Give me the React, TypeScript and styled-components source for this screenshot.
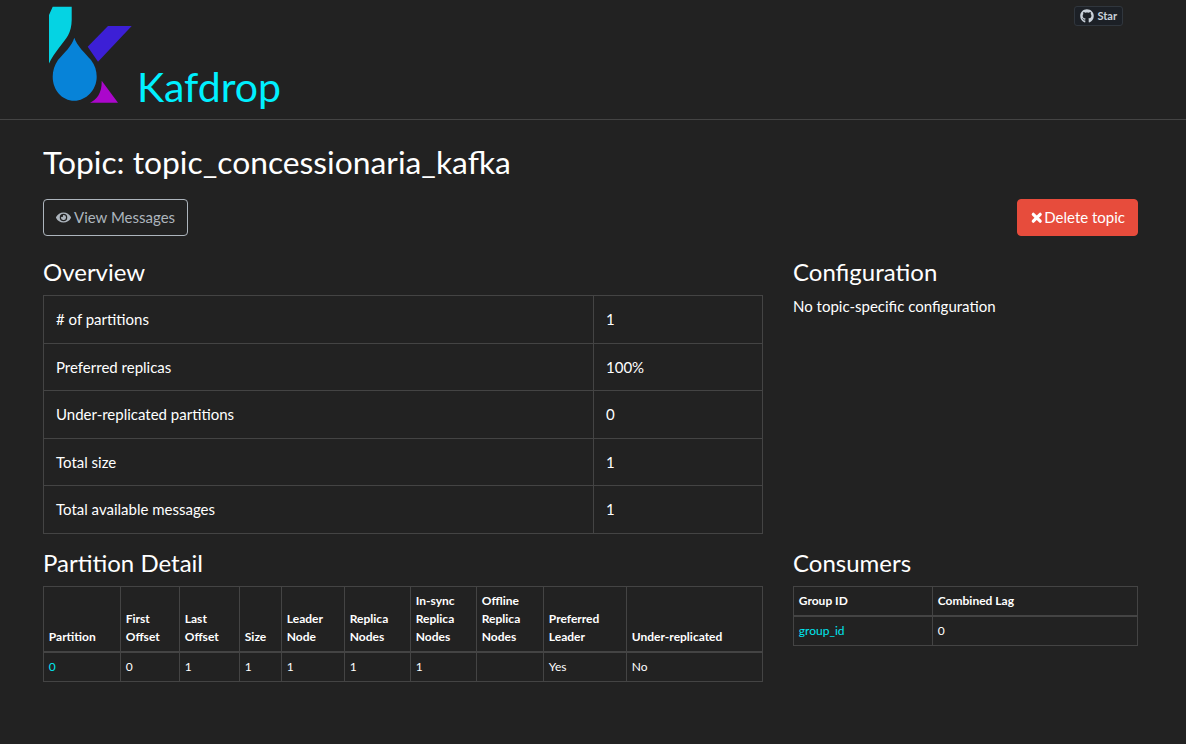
import styled, { createGlobalStyle } from "styled-components";
import { FaEye, FaGithub } from "react-icons/fa";

const GlobalStyle = createGlobalStyle`
  html, body {
    margin: 0;
    background-color: #222222;
    color: #ffffff;
    font-family: Lato, "Liberation Sans", sans-serif;
    font-size: 15px;
    line-height: 1.5;
  }
  * {
    box-sizing: border-box;
  }
`;

const Header = styled.header`
  height: 120px;
  border-bottom: 1px solid #444444;
  padding: 6px 63px 0 49px;
  display: flex;
  justify-content: space-between;
  align-items: flex-start;
`;
const Brand = styled.div`
  display: flex;
  align-items: flex-start;
`;
const BrandName = styled.span`
  font-size: 41px;
  line-height: 47px;
  margin: 57px 0 0 5px;
  color: #00f0ff;
`;
const StarButton = styled.a`
  display: flex;
  align-items: center;
  gap: 3px;
  height: 20px;
  padding: 0 5px;
  font-size: 11px;
  font-weight: 700;
  color: #c9d1d9;
  background-color: #1c2026;
  border: 1px solid #30363d;
  border-radius: 3px;
`;
const Container = styled.main`
  padding: 0 48px 0 43px;
`;
const Title = styled.h1`
  font-size: 31.8px;
  font-weight: 400;
  line-height: 39px;
  margin: 23px 0 17px;
`;
const ActionBar = styled.div`
  display: flex;
  justify-content: space-between;
  margin-bottom: 22px;
`;
const Button = styled.button<{ $danger?: boolean }>`
  display: flex;
  align-items: center;
  gap: ${(props) => (props.$danger ? "0" : "3px")};
  height: 37px;
  padding: 0 12px;
  font: inherit;
  color: ${(props) => (props.$danger ? "#ffffff" : "#adb5bd")};
  background-color: ${(props) => (props.$danger ? "#e74c3c" : "transparent")};
  border: 1px solid ${(props) => (props.$danger ? "#e74c3c" : "#adb5bd")};
  border-radius: 4px;
`;
const Row = styled.section`
  display: flex;
  gap: 30px;
  margin-bottom: 15px;
`;
const MainColumn = styled.div`
  width: 720px;
`;
const SideColumn = styled.div`
  width: 345px;
`;
const SectionTitle = styled.h2`
  font-size: 24px;
  font-weight: 400;
  line-height: 27px;
  margin: 0 0 10px;
`;
const Text = styled.p`
  margin: 0;
`;
const Table = styled.table`
  width: 100%;
  border-collapse: collapse;
  border: 1px solid #444444;
`;
const Cell = styled.td<{ $wide?: boolean }>`
  padding: 12px;
  border: 1px solid #444444;
  width: ${(props) => (props.$wide ? "550px" : "auto")};
`;
const SmallTable = styled(Table)`
  font-size: 12px;
  table-layout: fixed;
`;
const Column = styled.col<{ $width: number }>`
  width: ${(props) => props.$width}px;
`;
const HeadCell = styled.th`
  padding: 5.25px 4.8px;
  border: 1px solid #444444;
  border-bottom-width: 2px;
  text-align: left;
  vertical-align: bottom;
  font-weight: 700;
`;
const SmallCell = styled.td`
  padding: 4.8px;
  border: 1px solid #444444;
`;
const CellLink = styled.a`
  color: #00e6f0;
`;

const Logo = () => (
  <svg width="83" height="98" viewBox="0 0 83 98">
    <path d="M3.7 .7H22.7V14C22.6 20 21.5 25 19 29.5C15 36 5 47 0 57.5V9Z" fill="#05d3e3" />
    <path d="M59 20H82.7L49 55.7L38.7 40.7Z" fill="#3c1fd6" />
    <path d="M25.3 31.7C28 40 36 47 42 54C46 59 47.7 65 47.7 70.7C47.7 84 37 94.7 25.3 94.7C13 94.7 3.7 84 3.7 70.7C3.7 65 5.5 59 9 54C15 47 23 40 25.3 31.7Z" fill="#0783d8" />
    <path d="M52.7 74.7L69 96.7H41C47 94 53 88 52.7 74.7Z" fill="#ab07cc" />
  </svg>
);

const RemoveIcon = () => (
  <svg width="14" height="14" viewBox="0 0 14 14">
    <path
      d="M3.3 3.3L10.2 10.2M10.2 3.3L3.3 10.2"
      stroke="currentColor"
      strokeWidth="3.2"
      strokeLinecap="round"
      fill="none"
    />
  </svg>
);

const overview = [
  ["# of partitions", "1"],
  ["Preferred replicas", "100%"],
  ["Under-replicated partitions", "0"],
  ["Total size", "1"],
  ["Total available messages", "1"],
];

const partitionColumns = [77, 59, 60, 42, 63, 66, 66, 67, 83, 136];
const partitionHeads = [
  "Partition",
  "First Offset",
  "Last Offset",
  "Size",
  "Leader Node",
  "Replica Nodes",
  "In-sync Replica Nodes",
  "Offline Replica Nodes",
  "Preferred Leader",
  "Under-replicated",
];
const partitionValues = ["0", "1", "1", "1", "1", "1", "", "Yes", "No"];

export default function App() {
  return (
    <>
      <GlobalStyle />
      <Header>
        <Brand>
          <Logo />
          <BrandName>Kafdrop</BrandName>
        </Brand>
        <StarButton>
          <FaGithub size={14} />
          Star
        </StarButton>
      </Header>
      <Container>
        <Title>Topic: topic_concessionaria_kafka</Title>
        <ActionBar>
          <Button>
            <FaEye size={15} />
            View Messages
          </Button>
          <Button $danger>
            <RemoveIcon />
            Delete topic
          </Button>
        </ActionBar>
        <Row>
          <MainColumn>
            <SectionTitle>Overview</SectionTitle>
            <Table>
              <tbody>
                {overview.map(([label, value]) => (
                  <tr key={label}>
                    <Cell $wide>{label}</Cell>
                    <Cell>{value}</Cell>
                  </tr>
                ))}
              </tbody>
            </Table>
          </MainColumn>
          <SideColumn>
            <SectionTitle>Configuration</SectionTitle>
            <Text>No topic-specific configuration</Text>
          </SideColumn>
        </Row>
        <Row>
          <MainColumn>
            <SectionTitle>Partition Detail</SectionTitle>
            <SmallTable>
              <colgroup>
                {partitionColumns.map((width, i) => (
                  <Column key={i} $width={width} />
                ))}
              </colgroup>
              <thead>
                <tr>
                  {partitionHeads.map((head) => (
                    <HeadCell key={head}>{head}</HeadCell>
                  ))}
                </tr>
              </thead>
              <tbody>
                <tr>
                  <SmallCell>
                    <CellLink>0</CellLink>
                  </SmallCell>
                  {partitionValues.map((value, i) => (
                    <SmallCell key={i}>{value}</SmallCell>
                  ))}
                </tr>
              </tbody>
            </SmallTable>
          </MainColumn>
          <SideColumn>
            <SectionTitle>Consumers</SectionTitle>
            <SmallTable>
              <colgroup>
                <Column $width={139} />
                <Column $width={205} />
              </colgroup>
              <thead>
                <tr>
                  <HeadCell>Group ID</HeadCell>
                  <HeadCell>Combined Lag</HeadCell>
                </tr>
              </thead>
              <tbody>
                <tr>
                  <SmallCell>
                    <CellLink>group_id</CellLink>
                  </SmallCell>
                  <SmallCell>0</SmallCell>
                </tr>
              </tbody>
            </SmallTable>
          </SideColumn>
        </Row>
      </Container>
    </>
  );
}
